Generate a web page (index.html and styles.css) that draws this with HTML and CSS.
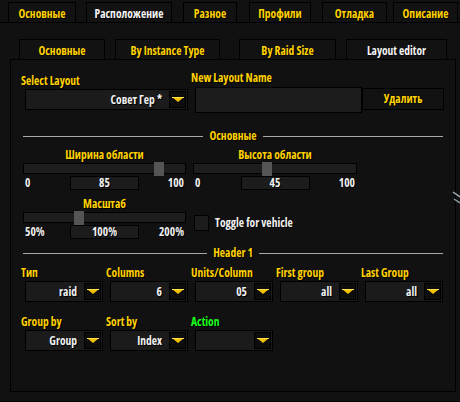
FILE: index.html
```html
<!DOCTYPE html>
<html>
<head>
<meta charset="utf-8">
<link rel="stylesheet" href="styles.css">
</head>
<body>
<div class="frame">
  <div class="tabs">
    <div class="tab t1">Основные</div>
    <div class="tab t2 active">Расположение</div>
    <div class="tab t3">Разное</div>
    <div class="tab t4">Профили</div>
    <div class="tab t5">Отладка</div>
    <div class="tab t6">Описание</div>
  </div>
  <div class="outer">
    <div class="subtabs">
      <div class="subtab s1">Основные</div>
      <div class="subtab s2">By Instance Type</div>
      <div class="subtab s3">By Raid Size</div>
      <div class="subtab s4 active">Layout editor</div>
    </div>
    <div class="panel">
      <div class="row-a">
        <div class="grp-select">
          <div class="label">Select Layout</div>
          <div class="dropdown dd-wide">
            <span class="dd-text">Совет Гер *</span>
            <span class="dd-btn"><svg width="12" height="6" viewBox="0 0 12 6"><polygon points="0,0 12,0 6,5" fill="#f2c200"/><rect x="0" y="0" width="12" height="1" fill="#ffe24a"/></svg></span>
          </div>
        </div>
        <div class="grp-name">
          <div class="label">New Layout Name</div>
          <div class="input"></div>
        </div>
        <div class="btn">Удалить</div>
      </div>

      <div class="heading h-main"><span class="line"></span><span class="htext">Основные</span><span class="line"></span></div>

      <div class="slider-row">
        <div class="slider">
          <div class="label center">Ширина области</div>
          <div class="track"><span class="thumb" style="left:130px"></span></div>
          <div class="vals"><span class="vmin">0</span><span class="vbox">85</span><span class="vmax">100</span></div>
        </div>
        <div class="slider s-right">
          <div class="label center">Высота области</div>
          <div class="track"><span class="thumb" style="left:68px"></span></div>
          <div class="vals"><span class="vmin">0</span><span class="vbox">45</span><span class="vmax">100</span></div>
        </div>
      </div>

      <div class="slider-row row-scale">
        <div class="slider">
          <div class="label center">Масштаб</div>
          <div class="track"><span class="thumb" style="left:50px"></span></div>
          <div class="vals"><span class="vmin">50%</span><span class="vbox">100%</span><span class="vmax">200%</span></div>
        </div>
        <div class="check">
          <span class="box"></span><span class="ctext">Toggle for vehicle</span>
        </div>
      </div>

      <div class="heading h-header"><span class="line"></span><span class="htext">Header 1</span><span class="line"></span></div>

      <div class="dd-row r1">
        <div class="col"><div class="label">Тип</div><div class="dropdown"><span class="dd-text">raid</span><span class="dd-btn"><svg width="12" height="6" viewBox="0 0 12 6"><polygon points="0,0 12,0 6,5" fill="#f2c200"/><rect x="0" y="0" width="12" height="1" fill="#ffe24a"/></svg></span></div></div>
        <div class="col"><div class="label">Columns</div><div class="dropdown"><span class="dd-text">6</span><span class="dd-btn"><svg width="12" height="6" viewBox="0 0 12 6"><polygon points="0,0 12,0 6,5" fill="#f2c200"/><rect x="0" y="0" width="12" height="1" fill="#ffe24a"/></svg></span></div></div>
        <div class="col"><div class="label">Units/Column</div><div class="dropdown"><span class="dd-text">05</span><span class="dd-btn"><svg width="12" height="6" viewBox="0 0 12 6"><polygon points="0,0 12,0 6,5" fill="#f2c200"/><rect x="0" y="0" width="12" height="1" fill="#ffe24a"/></svg></span></div></div>
        <div class="col"><div class="label">First group</div><div class="dropdown"><span class="dd-text">all</span><span class="dd-btn"><svg width="12" height="6" viewBox="0 0 12 6"><polygon points="0,0 12,0 6,5" fill="#f2c200"/><rect x="0" y="0" width="12" height="1" fill="#ffe24a"/></svg></span></div></div>
        <div class="col"><div class="label">Last Group</div><div class="dropdown"><span class="dd-text">all</span><span class="dd-btn"><svg width="12" height="6" viewBox="0 0 12 6"><polygon points="0,0 12,0 6,5" fill="#f2c200"/><rect x="0" y="0" width="12" height="1" fill="#ffe24a"/></svg></span></div></div>
      </div>

      <div class="dd-row r2">
        <div class="col"><div class="label">Group by</div><div class="dropdown"><span class="dd-text">Group</span><span class="dd-btn"><svg width="12" height="6" viewBox="0 0 12 6"><polygon points="0,0 12,0 6,5" fill="#f2c200"/><rect x="0" y="0" width="12" height="1" fill="#ffe24a"/></svg></span></div></div>
        <div class="col"><div class="label">Sort by</div><div class="dropdown"><span class="dd-text">Index</span><span class="dd-btn"><svg width="12" height="6" viewBox="0 0 12 6"><polygon points="0,0 12,0 6,5" fill="#f2c200"/><rect x="0" y="0" width="12" height="1" fill="#ffe24a"/></svg></span></div></div>
        <div class="col"><div class="label green">Action</div><div class="dropdown"><span class="dd-text"></span><span class="dd-btn"><svg width="12" height="6" viewBox="0 0 12 6"><polygon points="0,0 12,0 6,5" fill="#f2c200"/><rect x="0" y="0" width="12" height="1" fill="#ffe24a"/></svg></span></div></div>
      </div>
    </div>
    <svg class="grip" width="8" height="16" viewBox="0 0 8 16"><path d="M1 1 L8 6" stroke="#9fb0b8" stroke-width="1.5" fill="none"/><path d="M2 8 L8 12" stroke="#8a9aa0" stroke-width="1.5" fill="none"/></svg>
  </div>
</div>
</body>
</html>
```

FILE: styles.css
```css
* { box-sizing: border-box; }
html, body {
  margin: 0;
  padding: 0;
  background: #111111;
}
body {
  width: 460px;
  height: 402px;
  overflow: hidden;
  font-family: "Open Sans", "Liberation Sans", sans-serif;
  font-stretch: condensed;
  font-weight: bold;
  font-size: 11.5px;
  line-height: 14px;
  color: #ffd100;
  text-shadow: 1px 1px 0 #000;
}
.frame { width: 460px; height: 402px; }

.tabs {
  display: flex;
  height: 22px;
  padding-top: 2px;
}
.tab {
  height: 20px;
  border: 1px solid #000;
  border-bottom: none;
  padding-top: 4px;
  text-align: center;
  white-space: nowrap;
  background: #121212;
}
.tab.active, .subtab.active { color: #f4f4f4; }
.t1 { margin-left: 8px; width: 68px; }
.t2 { margin-left: 10px; width: 86px; }
.t3 { margin-left: 11px; width: 54px; }
.t4 { margin-left: 12px; width: 62px; }
.t5 { margin-left: 11px; width: 65px; }
.t6 { margin-left: 6px; width: 65px; }

.outer {
  position: relative;
  height: 380px;
  border-top: 1px solid #000;
  border-bottom: 1px solid #000;
  padding-left: 10px;
}
.subtabs {
  display: flex;
  height: 36px;
  padding-top: 16px;
}
.subtab {
  height: 20px;
  border: 1px solid #000;
  border-bottom: none;
  padding-top: 4px;
  text-align: center;
  white-space: nowrap;
  background: #121212;
}
.s1 { margin-left: 9px; width: 86px; }
.s2 { margin-left: 10px; width: 105px; }
.s3 { margin-left: 19px; width: 97px; }
.s4 { margin-left: 10px; width: 101px; }

.panel {
  width: 446px;
  height: 333px;
  border: 1px solid #000;
  padding-left: 10px;
}

.label { white-space: nowrap; }
.label.center { text-align: center; }
.label.green { color: #1eff1e; }

.row-a {
  display: flex;
  align-items: flex-start;
  padding-top: 14px;
}
.grp-select { width: 170px; }
.grp-name { width: 171px; margin-top: -3px; }

.dropdown {
  margin-left: 4px;
  margin-top: 1px;
  width: 78px;
  height: 21px;
  border: 1px solid #000;
  background: #1b1b1b;
  display: flex;
  align-items: center;
  justify-content: flex-end;
  padding-right: 1px;
}
.dd-wide { width: 163px; padding-right: 1px; }
.dd-text {
  color: #f0f0f0;
  padding-right: 7px;
  white-space: nowrap;
}
.dd-btn {
  width: 17px;
  height: 17px;
  border: 1px solid #000;
  background: #0d0d0d;
  display: flex;
  align-items: center;
  justify-content: center;
}
.dd-btn svg { display: block; margin-top: 1px; }

.input {
  margin-left: 4px;
  margin-top: 2px;
  width: 167px;
  height: 26px;
  border: 1px solid #000;
  background: #1c1c1c;
}
.btn {
  margin-top: 14px;
  width: 82px;
  height: 22px;
  border: 1px solid #000;
  background: #121212;
  text-align: center;
  line-height: 20px;
}

.heading {
  display: flex;
  align-items: center;
  margin-left: 2px;
  width: 420px;
  height: 12px;
  line-height: 12px;
}
.heading .line {
  flex: 1;
  height: 1px;
  background: #a8a8a8;
}
.heading .htext { padding: 0 6px; }
.h-main { margin-top: 17px; }
.h-header { margin-top: 8px; }

.slider-row {
  display: flex;
  margin-top: 6px;
  padding-left: 2px;
}
.row-scale { margin-top: 7px; }
.slider { width: 163px; }
.s-right { width: 164px; margin-left: 7px; }
.track {
  position: relative;
  margin-top: 1px;
  height: 11px;
  border: 1px solid #000;
  background: #1e1e1e;
}
.thumb {
  position: absolute;
  top: -2px;
  width: 10px;
  height: 14px;
  background: #555555;
}
.vals {
  display: grid;
  grid-template-columns: 1fr 69px 1fr;
  margin-top: 2px;
  height: 14px;
  color: #f0f0f0;
  line-height: 14px;
}
.vmin { padding-left: 2px; }
.vmax { text-align: right; padding-right: 2px; }
.vbox {
  border: 1px solid #000;
  background: #1c1c1c;
  text-align: center;
  line-height: 12px;
}

.check {
  display: flex;
  align-items: center;
  margin-left: 8px;
  margin-top: 18px;
  height: 16px;
}
.check .box {
  width: 15px;
  height: 16px;
  border: 1px solid #000;
  background: #1c1c1c;
}
.check .ctext { color: #f0f0f0; margin-left: 6px; }

.dd-row { display: flex; }
.dd-row .col { width: 85px; }
.r1 { margin-top: 7px; }
.r2 { margin-top: 13px; }

.grip {
  position: absolute;
  left: 452px;
  top: 168px;
}
```
